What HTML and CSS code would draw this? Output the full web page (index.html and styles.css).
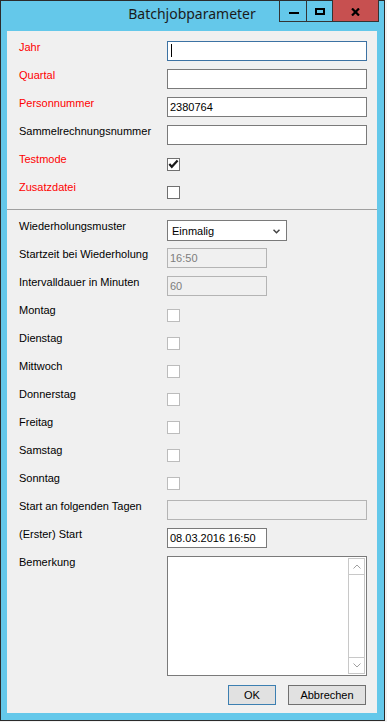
FILE: index.html
```html
<html>
<head>
	<meta charset="UTF-8">
	<title>Batchjobparameter</title>
	<link rel="stylesheet" href="styles.css">
</head>
<body>
	<div class="window">

		<div class="titlebar">Batchjobparameter</div>

		<div class="caption-btns">
			<div class="cbtn cbtn-min"><span class="min-bar"></span></div>
			<div class="cbtn cbtn-max"><span class="max-box"></span></div>
			<div class="cbtn cbtn-close">
				<svg width="9" height="8" viewBox="0 0 9 8"><path d="M1 0.5 L8 7.5 M8 0.5 L1 7.5" stroke="#000" stroke-width="2.2" fill="none"/></svg>
			</div>
		</div>

		<div class="client">

			<div class="form">
				<div class="row">
					<div class="label req">Jahr</div>
					<div class="textbox focus"><span class="caret"></span></div>
				</div>
				<div class="row">
					<div class="label req">Quartal</div>
					<div class="textbox"></div>
				</div>
				<div class="row">
					<div class="label req">Personnummer</div>
					<div class="textbox">2380764</div>
				</div>
				<div class="row">
					<div class="label">Sammelrechnungsnummer</div>
					<div class="textbox"></div>
				</div>
				<div class="row">
					<div class="label req">Testmode</div>
					<div class="check">
						<svg width="11" height="11" viewBox="0 0 11 11"><polyline points="1.3,5 3.8,7.8 9.6,1.6" stroke="#1a1a1a" stroke-width="2.2" fill="none"/></svg>
					</div>
				</div>
				<div class="row">
					<div class="label req">Zusatzdatei</div>
					<div class="check"></div>
				</div>
			</div>

			<div class="sep"></div>

			<div class="form">
				<div class="row">
					<div class="label">Wiederholungsmuster</div>
					<div class="combo">
						<span>Einmalig</span>
						<svg width="7" height="5" viewBox="0 0 7 5"><polyline points="0.5,0.8 3.5,3.8 6.5,0.8" stroke="#444" stroke-width="1.5" fill="none"/></svg>
					</div>
				</div>
				<div class="row">
					<div class="label">Startzeit bei Wiederholung</div>
					<div class="textbox short disabled">16:50</div>
				</div>
				<div class="row">
					<div class="label">Intervalldauer in Minuten</div>
					<div class="textbox short disabled">60</div>
				</div>
				<div class="row">
					<div class="label">Montag</div>
					<div class="check disabled"></div>
				</div>
				<div class="row">
					<div class="label">Dienstag</div>
					<div class="check disabled"></div>
				</div>
				<div class="row">
					<div class="label">Mittwoch</div>
					<div class="check disabled"></div>
				</div>
				<div class="row">
					<div class="label">Donnerstag</div>
					<div class="check disabled"></div>
				</div>
				<div class="row">
					<div class="label">Freitag</div>
					<div class="check disabled"></div>
				</div>
				<div class="row">
					<div class="label">Samstag</div>
					<div class="check disabled"></div>
				</div>
				<div class="row">
					<div class="label">Sonntag</div>
					<div class="check disabled"></div>
				</div>
				<div class="row">
					<div class="label">Start an folgenden Tagen</div>
					<div class="textbox disabled"></div>
				</div>
				<div class="row">
					<div class="label">(Erster) Start</div>
					<div class="textbox short">08.03.2016 16:50</div>
				</div>
				<div class="row row-memo">
					<div class="label">Bemerkung</div>
					<div class="memo">
						<div class="scrollbar">
							<div class="sb-btn sb-up">
								<svg width="8" height="5" viewBox="0 0 8 5"><polyline points="0.5,4.5 4,1 7.5,4.5" stroke="#a0a0a0" stroke-width="1" fill="none"/></svg>
							</div>
							<div class="sb-track"></div>
							<div class="sb-btn sb-down">
								<svg width="8" height="5" viewBox="0 0 8 5"><polyline points="0.5,0.5 4,4 7.5,0.5" stroke="#a0a0a0" stroke-width="1" fill="none"/></svg>
							</div>
						</div>
					</div>
				</div>
			</div>

			<div class="actions">
				<div class="btn btn-default">OK</div>
				<div class="btn btn-cancel">Abbrechen</div>
			</div>

		</div>
	</div>
</body>
</html>
```

FILE: styles.css
```css
html,
body
{
	margin: 0;
	background: #f2f2f2;
}

body
{
	font-family: "Liberation Sans", Arial, sans-serif;
	font-size: 11px;
	color: #000;
}

.window
{
	position: relative;
	box-sizing: border-box;
	width: 385px;
	height: 721px;
	padding: 0 7px 7px 6px;
	border: 1px solid #2b2b2b;
	background: #64c8ea;
}

.titlebar
{
	box-sizing: border-box;
	height: 30px;
	padding-top: 3px;
	text-align: center;
	font-family: "Noto Sans", sans-serif;
	font-size: 14px;
	line-height: 20px;
	color: #1b1b1b;
}

/* min / max / close sit over the frame edge */
.caption-btns
{
	position: absolute;
	top: -1px;
	right: 5px;
	display: flex;
}

.cbtn
{
	box-sizing: border-box;
	height: 22px;
	display: flex;
	justify-content: center;
	align-items: flex-start;
	border-left: 1px solid #333;
	border-bottom: 1px solid #333;
}

.cbtn-min
{
	width: 27px;
	padding-top: 12px;
}

.cbtn-max
{
	width: 26px;
	padding-top: 8px;
}

.cbtn-close
{
	width: 47px;
	padding-top: 8px;
	border-right: 1px solid #333;
	background: #c75050;
}

.min-bar
{
	display: block;
	width: 10px;
	height: 2px;
	margin-left: 1px;
	background: #000;
}

.max-box
{
	display: block;
	width: 6px;
	height: 3px;
	margin-left: 1px;
	border: 2px solid #000;
}

.client
{
	box-sizing: border-box;
	height: 682px;
	padding: 10px 10px 8px 12px;
	background: #f0f0f0;
}

.row
{
	display: grid;
	grid-template-columns: 148px auto;
	align-items: start;
	height: 28px;
}

.row-memo
{
	height: 120px;
}

.label
{
	line-height: 13px;
	white-space: nowrap;
}

.label.req
{
	color: #f00;
}

.textbox
{
	box-sizing: border-box;
	width: 200px;
	height: 20px;
	padding: 0 2px;
	border: 1px solid #7a7a7a;
	background: #fff;
	line-height: 18px;
}

.textbox.short
{
	width: 100px;
}

.textbox.focus
{
	border-color: #3c72a3;
}

.textbox.disabled
{
	border-color: #b4b4b4;
	background: #f0f0f0;
	color: #7d7d7d;
}

.caret
{
	display: block;
	width: 1px;
	height: 13px;
	margin: 2px 0 0 1px;
	background: #000;
}

.check
{
	box-sizing: border-box;
	width: 13px;
	height: 13px;
	margin-top: 5px;
	border: 1px solid #707070;
	background: #fff;
}

.check svg
{
	display: block;
}

.check.disabled
{
	border-color: #bcbcbc;
}

.combo
{
	box-sizing: border-box;
	width: 120px;
	height: 21px;
	padding: 0 6px 0 4px;
	display: flex;
	justify-content: space-between;
	align-items: center;
	border: 1px solid #7a7a7a;
	background: #fff;
}

.combo svg
{
	margin-top: 1px;
}

.sep
{
	height: 1px;
	margin: 0 -10px 10px -12px;
	background: #a0a0a0;
}

.memo
{
	box-sizing: border-box;
	width: 200px;
	height: 120px;
	padding: 1px;
	display: flex;
	justify-content: flex-end;
	border: 1px solid #7a7a7a;
	background: #fff;
}

.scrollbar
{
	box-sizing: border-box;
	width: 17px;
	display: flex;
	flex-direction: column;
	border: 1px solid #c8c8c8;
}

.sb-btn
{
	height: 15px;
	display: flex;
	justify-content: center;
	align-items: center;
}

.sb-up
{
	border-bottom: 1px solid #c8c8c8;
}

.sb-down
{
	border-top: 1px solid #c8c8c8;
}

.sb-track
{
	flex: 1;
}

.actions
{
	display: flex;
	justify-content: flex-end;
	gap: 12px;
	margin-top: 9px;
	padding-right: 1px;
}

.btn
{
	box-sizing: border-box;
	height: 20px;
	line-height: 18px;
	text-align: center;
	border: 1px solid #707070;
	background: #e1e1e1;
}

.btn-default
{
	width: 48px;
	border-color: #3c7fb1;
}

.btn-cancel
{
	width: 78px;
}
```
